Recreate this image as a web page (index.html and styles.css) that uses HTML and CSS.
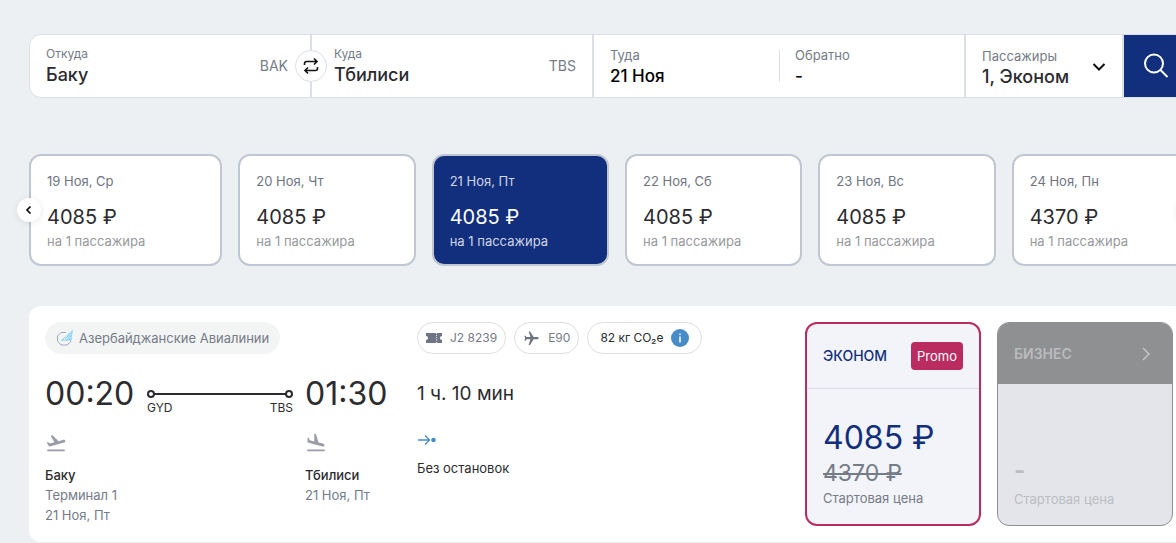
FILE: index.html
```html
<!DOCTYPE html>
<html lang="ru">
<head>
  <meta charset="UTF-8">
  <meta name="viewport" content="width=device-width, initial-scale=1.0">
  <title>Баку — Тбилиси</title>
  <link rel="stylesheet" href="styles.css">
</head>
<body>
  <div class="container">
    <form class="search">
      <div class="search-field">
        <div class="field-main">
          <label for="from">Откуда</label>
          <input id="from" type="text" value="Баку">
        </div>
        <span class="field-code">BAK</span>
        <button type="button" class="swap-btn" aria-label="Поменять местами">
          <svg width="16" height="18" viewBox="0 0 16 18" fill="none" stroke="#111" stroke-width="1.600">
            <path d="M1.500 8V6.500a2 2 0 0 1 2-2H14M11 1.500l3 3-3 3"/>
            <path d="M14.500 10v1.500a2 2 0 0 1-2 2H2M5 10.500l-3 3 3 3"/>
          </svg>
        </button>
      </div>
      <div class="search-field">
        <div class="field-main">
          <label for="to">Куда</label>
          <input id="to" type="text" value="Тбилиси">
        </div>
        <span class="field-code">TBS</span>
      </div>
      <div class="search-dates">
        <button type="button" class="date-btn">
          <span class="date-label">Туда</span>
          <span class="date-value">21 Ноя</span>
        </button>
        <button type="button" class="date-btn">
          <span class="date-label">Обратно</span>
          <span class="date-value">-</span>
        </button>
      </div>
      <div class="search-passengers">
        <label for="passengers">Пассажиры</label>
        <select id="passengers">
          <option>1, Эконом</option>
        </select>
        <svg class="chevron" width="14" height="8" viewBox="0 0 14 8" fill="none" stroke="#111" stroke-width="2">
          <path d="M1.500 1L7 6.500 12.500 1"/>
        </svg>
      </div>
      <button type="submit" class="search-btn" aria-label="Найти">
        <svg width="26" height="26" viewBox="0 0 26 26" fill="none" stroke="#fff" stroke-width="2">
          <circle cx="11" cy="10.500" r="9"/>
          <path d="M17.500 17l7 7"/>
        </svg>
      </button>
    </form>

    <div class="days">
      <button class="day">
        <span class="day-date">19 Ноя, Ср</span>
        <span class="day-price">4085 ₽</span>
        <span class="day-note">на 1 пассажира</span>
      </button>
      <button class="day">
        <span class="day-date">20 Ноя, Чт</span>
        <span class="day-price">4085 ₽</span>
        <span class="day-note">на 1 пассажира</span>
      </button>
      <button class="day active">
        <span class="day-date">21 Ноя, Пт</span>
        <span class="day-price">4085 ₽</span>
        <span class="day-note">на 1 пассажира</span>
      </button>
      <button class="day">
        <span class="day-date">22 Ноя, Сб</span>
        <span class="day-price">4085 ₽</span>
        <span class="day-note">на 1 пассажира</span>
      </button>
      <button class="day">
        <span class="day-date">23 Ноя, Вс</span>
        <span class="day-price">4085 ₽</span>
        <span class="day-note">на 1 пассажира</span>
      </button>
      <button class="day">
        <span class="day-date">24 Ноя, Пн</span>
        <span class="day-price">4370 ₽</span>
        <span class="day-note">на 1 пассажира</span>
      </button>
      <button class="days-nav prev" aria-label="Назад">
        <svg width="6" height="8" viewBox="0 0 6 8" fill="none" stroke="#111" stroke-width="1.700"><path d="M4.500 0.500L1 4l3.500 3.500"/></svg>
      </button>
      <button class="days-nav next" aria-label="Вперёд">
        <svg width="6" height="8" viewBox="0 0 6 8" fill="none" stroke="#111" stroke-width="1.700"><path d="M1.500 0.500L5 4 1.500 7.500"/></svg>
      </button>
    </div>

    <div class="flight">
      <div class="route">
        <div class="airline">
          <svg width="18" height="18" viewBox="0 0 18 18" fill="none">
            <path d="M10 3.500H5L1.500 7v5L5 16h6l3.500-3v-1.500" stroke="#a3a9bd"/>
            <path d="M17 0.500L4.500 12l11-0.500z" fill="#8fd0f0"/>
            <path d="M17 0.500L8 10M16.500 4.500L8 11M16 8l-9 3.500" stroke="#dff3fc" stroke-width="0.700"/>
          </svg>
          <span>Азербайджанские Авиалинии</span>
        </div>
        <div class="leg">
          <div class="time">00:20</div>
          <div class="track">
            <div class="track-line"></div>
            <div class="track-codes"><span>GYD</span><span>TBS</span></div>
          </div>
          <div class="time">01:30</div>
          <div class="point">
            <svg width="22" height="22" viewBox="0 0 24 24" fill="#9a9ca9">
              <path d="M2.500 19h19v2h-19zm19.570-9.360c-.21-.8-1.040-1.280-1.840-1.060L14.920 10l-6.900-6.430-1.930.51 4.140 7.170-4.970 1.330-1.970-1.540-1.450.39 1.820 3.160.77 1.330 1.600-.43 5.310-1.420 4.350-1.160L21 11.490c.81-.23 1.280-1.050 1.070-1.850z"/>
            </svg>
            <strong>Баку</strong>
            <span>Терминал 1</span>
            <span>21 Ноя, Пт</span>
          </div>
          <div class="point arrival">
            <svg width="22" height="22" viewBox="0 0 24 24" fill="#9a9ca9">
              <path d="M2.500 19h19v2h-19zm7.180-5.730l4.350 1.160 5.310 1.420c.8.21 1.620-.26 1.840-1.060.21-.8-.26-1.620-1.060-1.840l-5.310-1.420-2.760-9.020L10.120 2v8.280L5.150 8.950l-.93-2.320-1.450-.39v5.170l1.600.43 5.310 1.430z"/>
            </svg>
            <strong>Тбилиси</strong>
            <span>21 Ноя, Пт</span>
          </div>
        </div>
      </div>

      <div class="info">
        <div class="tags">
          <span class="tag">
            <svg width="16" height="10" viewBox="0 0 16 10">
              <path d="M0 0h9.500l1 1 1-1H16v3a2 2 0 0 0 0 4v3h-4.500l-1-1-1 1H0V7a2 2 0 0 0 0-4z" fill="#6f7585"/>
              <path d="M10.500 2v6" stroke="#fff" stroke-width="0.800" stroke-dasharray="1.200 1"/>
            </svg>
            J2 8239
          </span>
          <span class="tag">
            <svg width="17" height="17" viewBox="0 0 24 24" fill="#6f7585">
              <path transform="rotate(90 12 12)" d="M21 16v-2l-8-5V3.500c0-.83-.67-1.500-1.500-1.500S10 2.670 10 3.500V9l-8 5v2l8-2.500V19l-2 1.500V22l3.500-1 3.500 1v-1.500L13 19v-5.500l8 2.500z"/>
            </svg>
            E90
          </span>
          <span class="tag co2">
            82 кг CO₂e
            <svg width="18" height="18" viewBox="0 0 18 18">
              <circle cx="9" cy="9" r="9" fill="#488bc9"/>
              <path d="M9 7.500v6M9 4.500V6" stroke="#fff" stroke-width="1.500"/>
            </svg>
          </span>
        </div>
        <div class="duration">1 ч. 10 мин</div>
        <svg class="stops-icon" width="20" height="20" viewBox="0 0 20 20" fill="none" stroke="#488bc9">
          <path d="M1 10h11.500M8 5.500l4.500 4.500L8 14.500" stroke-width="1.300"/>
          <circle cx="16.500" cy="10" r="2.300" fill="#488bc9" stroke="none"/>
        </svg>
        <div class="stops">Без остановок</div>
      </div>

      <button class="fare economy">
        <span class="fare-head">
          <span class="fare-name">ЭКОНОМ</span>
          <span class="promo">Promo</span>
        </span>
        <span class="fare-body">
          <span class="fare-price">4085 ₽</span>
          <s class="fare-old">4370 ₽</s>
          <span class="fare-note">Стартовая цена</span>
        </span>
      </button>
      <button class="fare business" disabled>
        <span class="fare-head">
          <span class="fare-name">БИЗНЕС</span>
          <svg width="8" height="14" viewBox="0 0 8 14" fill="none" stroke="#c4c5c7" stroke-width="1.500"><path d="M1 1l6 6-6 6"/></svg>
        </span>
        <span class="fare-body">
          <span class="fare-none">-</span>
          <span class="fare-note">Стартовая цена</span>
        </span>
      </button>
    </div>
  </div>
</body>
</html>
```
FILE: styles.css
```css
*,
*::before,
*::after {
  box-sizing: border-box;
  margin: 0;
  padding: 0;
}

body {
  background: #ecf0f3;
  color: #2b2b30;
  font-family: Inter, "Liberation Sans", sans-serif;
  font-size: 13px;
  line-height: 20px;
  overflow-x: hidden;
}

button,
input,
select {
  font: inherit;
  color: inherit;
  background: none;
  border: none;
  text-align: left;
}

button {
  cursor: pointer;
}

svg {
  display: block;
  flex-shrink: 0;
}

/* the strip runs a little past the right edge of the window */
.container {
  margin: 34px -13px 0 29px;
}

/* search form */
.search {
  display: grid;
  grid-template-columns: 1fr 1fr 372px 158px 64px;
  height: 64px;
  background: white;
  border: 1px solid #dbdfe5;
  border-radius: 12px;
}

.search-field,
.search-dates,
.search-passengers {
  position: relative;
  display: flex;
  border-right: 2px solid #dbdfe5;
}

.search-field {
  align-items: center;
  padding: 0 16px;
}

.search-field + .search-field {
  padding-left: 22px;
}

.search-field:first-child {
  padding-right: 22px;
}

.field-main {
  flex: 1;
  min-width: 0;
}

.search label,
.date-label {
  display: block;
  font-size: 12px;
  line-height: 18px;
  color: #757b87;
}

.search .search-passengers label,
.date-label {
  font-size: 13px;
}

.search input,
.search select,
.date-value {
  display: block;
  width: 100%;
  font-size: 18px;
  font-weight: 500;
  line-height: 24px;
}

.date-value {
  font-size: 17px;
}

.field-code {
  font-size: 14px;
  color: #757b87;
}

.swap-btn {
  position: absolute;
  top: 15px;
  right: -17px;
  z-index: 1;
  width: 32px;
  height: 32px;
  display: flex;
  align-items: center;
  justify-content: center;
  background: white;
  border: 1px solid #dbdfe5;
  border-radius: 50%;
}

.search-dates {
  align-items: center;
}

.date-btn {
  flex: 1;
  padding: 2px 16px 0;
  color: black;
}

.date-btn + .date-btn {
  position: relative;
}

.date-btn + .date-btn::before {
  content: "";
  position: absolute;
  top: 6px;
  bottom: 6px;
  left: 0;
  width: 1px;
  background: #dbdfe5;
}

.search-passengers {
  flex-direction: column;
  justify-content: center;
  padding: 4px 0 0 16px;
}

.search select {
  appearance: none;
}

.chevron {
  position: absolute;
  top: 28px;
  right: 16px;
  pointer-events: none;
}

.search-btn {
  display: flex;
  align-items: center;
  justify-content: center;
  background: #122f7d;
  border-radius: 0 12px 12px 0;
}

/* days */
.days {
  position: relative;
  display: grid;
  grid-template-columns: repeat(6, 1fr);
  margin-top: 56px;
}

.day {
  height: 112px;
  padding: 15px 16px;
  background: white;
  border: 2px solid #c0c7d2;
  border-radius: 12px;
}

.day + .day {
  margin-left: 16px;
}

.day span {
  display: block;
}

.day-date {
  color: #6f7480;
}

.day .day-price {
  padding-top: 13px;
  font-size: 20px;
  line-height: 27px;
}

.day-note {
  color: #97999d;
}

.day.active {
  background: #122f7d;
  color: white;
}

.day.active .day-date,
.day.active .day-note {
  color: #d0d5e5;
}

.days-nav {
  position: absolute;
  top: 44px;
  width: 24px;
  height: 24px;
  display: flex;
  align-items: center;
  justify-content: center;
  background: white;
  border-radius: 50%;
  box-shadow: 0 1px 6px rgba(0, 0, 0, 0.1);
}

.days-nav.prev {
  left: -12px;
}

.days-nav.next {
  right: -12px;
}

/* flight card */
.flight {
  display: grid;
  grid-template-columns: 1fr 1fr 192px 192px;
  margin-top: 40px;
  padding: 16px;
  background: white;
  border-radius: 12px;
}

.route {
  padding-right: 32px;
}

.airline {
  display: inline-flex;
  align-items: center;
  gap: 5px;
  height: 32px;
  padding: 0 11px;
  background: #f3f5f5;
  border-radius: 16px;
  color: #757b87;
}

.leg {
  display: grid;
  grid-template-columns: 90px 1fr 80px;
  column-gap: 12px;
  margin-top: 20px;
}

.time {
  font-size: 32px;
  line-height: 40px;
  white-space: nowrap;
}

.track {
  padding-top: 16px;
}

.track-line {
  position: relative;
  height: 8px;
  background: linear-gradient(#2b2b30, #2b2b30) center no-repeat;
  background-size: calc(100% - 14px) 2px;
}

.track-line::before,
.track-line::after {
  content: "";
  position: absolute;
  top: 0;
  width: 8px;
  height: 8px;
  border: 2px solid #2b2b30;
  border-radius: 50%;
}

.track-line::before {
  left: 0;
}

.track-line::after {
  right: 0;
}

.track-codes {
  display: flex;
  justify-content: space-between;
  font-size: 12px;
}

.point {
  grid-column: 1 / 3;
  margin-top: 14px;
  color: #757b87;
}

.point.arrival {
  grid-column: 3;
}

.point svg {
  margin-bottom: 11px;
}

.point strong,
.point span {
  display: block;
  white-space: nowrap;
}

.point strong {
  color: #2b2b30;
  font-weight: 500;
}

.tags {
  display: flex;
  gap: 8px;
}

.tag {
  display: flex;
  align-items: center;
  gap: 8px;
  height: 32px;
  padding: 0 8px;
  border: 1px solid #dddfe4;
  border-radius: 16px;
  font-size: 12px;
  color: #757b87;
  white-space: nowrap;
}

.tag.co2 {
  padding: 0 12px;
  color: #2b2b30;
}

.duration {
  margin-top: 20px;
  font-size: 19px;
  line-height: 40px;
}

.stops-icon {
  margin: 16px 0 8px;
}

/* fares */
.fare {
  display: flex;
  flex-direction: column;
  height: 204px;
  margin-left: 16px;
  overflow: hidden;
  border-radius: 12px;
}

.fare-head {
  display: flex;
  align-items: center;
  justify-content: space-between;
  width: 100%;
  padding: 0 16px;
}

.fare-name {
  font-size: 14px;
  font-weight: 500;
}

.fare-body {
  flex: 1;
  display: flex;
  flex-direction: column;
  justify-content: flex-end;
  width: 100%;
  padding: 16px;
}

.economy {
  background: #f3f4fa;
  border: 2px solid #ba2c5f;
  color: #122f7d;
}

.economy .fare-head {
  height: 65px;
  border-bottom: 1px solid #dbdfe5;
}

.promo {
  padding: 4px 6px;
  background: #ba2c5f;
  border-radius: 4px;
  color: white;
}

.fare-price {
  font-size: 32px;
  line-height: 40px;
}

.fare-old {
  font-size: 23px;
  line-height: 30px;
  color: #757b87;
}

.fare-note {
  color: #757b87;
}

.business {
  background: #e3e5ea;
  border: 1px solid #8f9092;
}

.business .fare-head {
  height: 61px;
  padding-right: 22px;
  background: #8f9092;
  color: #babbbd;
}

.business .fare-name {
  font-weight: 600;
}

.fare-none {
  font-size: 24px;
  font-weight: 700;
  line-height: 36px;
  color: #bdbec2;
}

.business .fare-note {
  color: #bdbec2;
}
```
